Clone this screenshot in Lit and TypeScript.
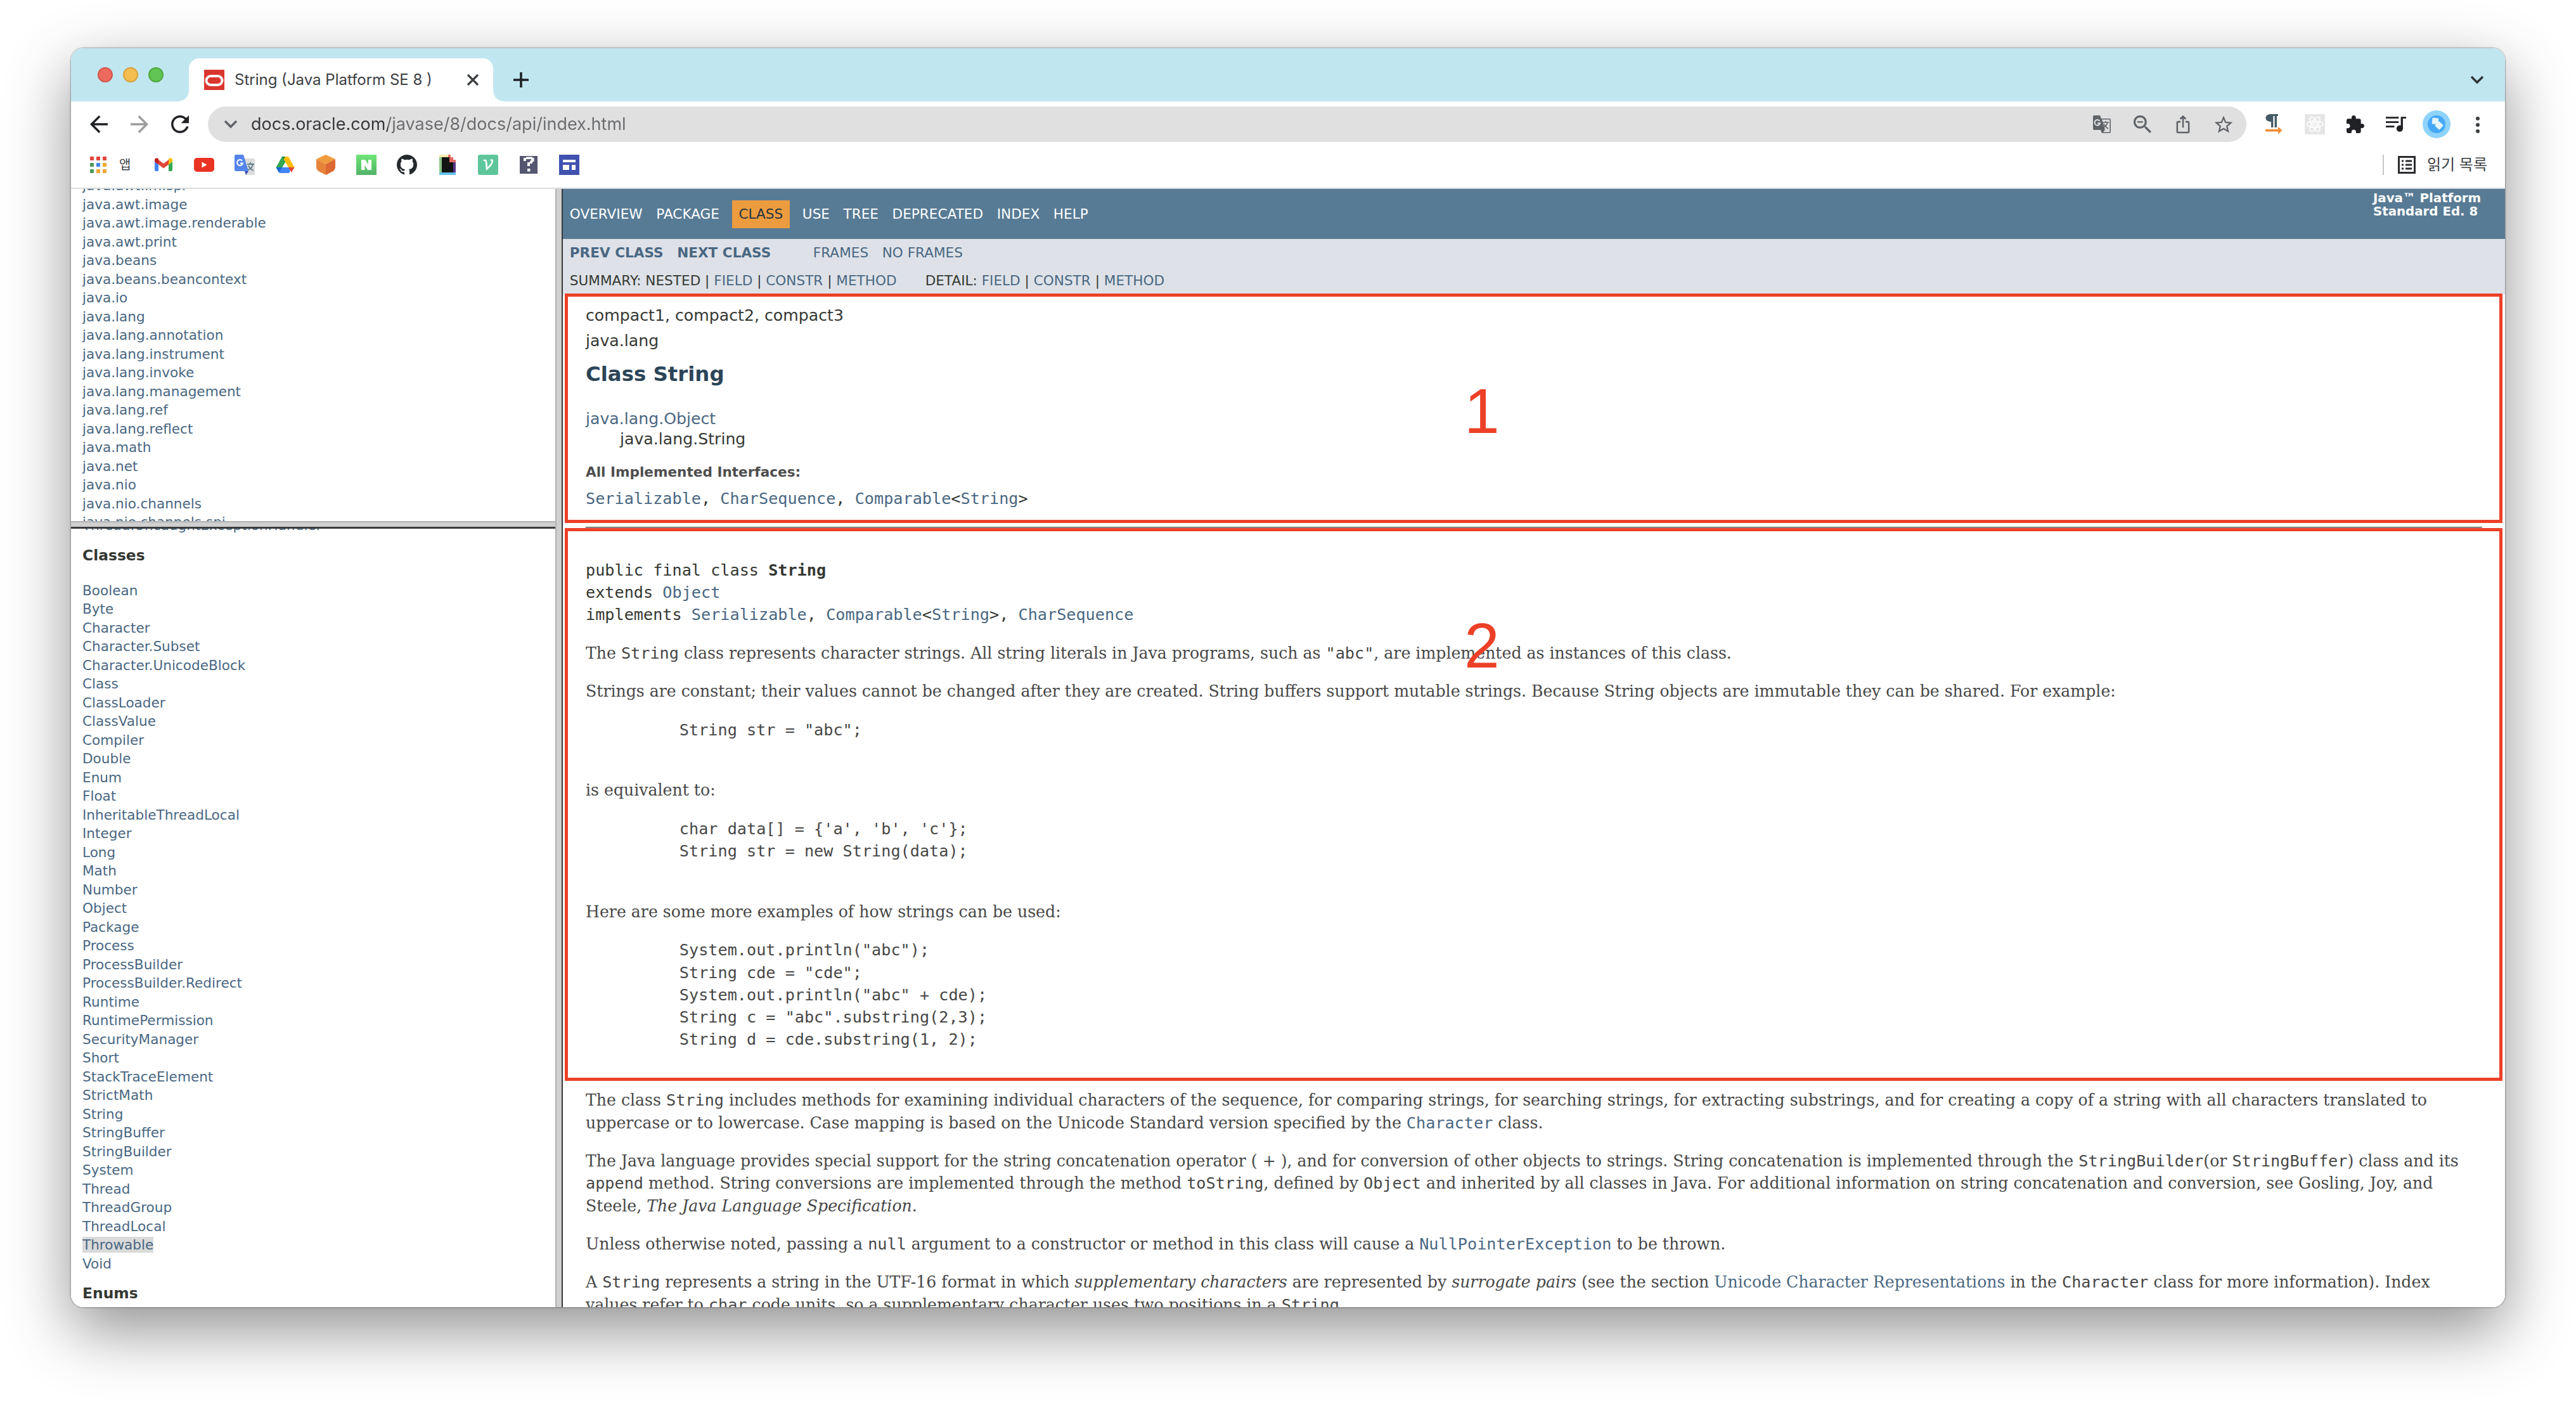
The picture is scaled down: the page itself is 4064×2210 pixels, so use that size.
import { LitElement, html, css, svg } from "lit";
import { customElement } from "lit/decorators.js";

const PACKAGES = [
  "java.awt.im.spi", "java.awt.image", "java.awt.image.renderable", "java.awt.print", "java.beans",
  "java.beans.beancontext", "java.io", "java.lang", "java.lang.annotation", "java.lang.instrument",
  "java.lang.invoke", "java.lang.management", "java.lang.ref", "java.lang.reflect", "java.math",
  "java.net", "java.nio", "java.nio.channels", "java.nio.channels.spi",
];

const CLASSES = [
  "Boolean", "Byte", "Character", "Character.Subset", "Character.UnicodeBlock", "Class", "ClassLoader",
  "ClassValue", "Compiler", "Double", "Enum", "Float", "InheritableThreadLocal", "Integer", "Long", "Math",
  "Number", "Object", "Package", "Process", "ProcessBuilder", "ProcessBuilder.Redirect", "Runtime",
  "RuntimePermission", "SecurityManager", "Short", "StackTraceElement", "StrictMath", "String",
  "StringBuffer", "StringBuilder", "System", "Thread", "ThreadGroup", "ThreadLocal", "Throwable", "Void",
];

const SAMPLE_LITERAL = `     String str = "abc";
 `;
const SAMPLE_ARRAY = `     char data[] = {'a', 'b', 'c'};
     String str = new String(data);
 `;
const SAMPLE_USES = `     System.out.println("abc");
     String cde = "cde";
     System.out.println("abc" + cde);
     String c = "abc".substring(2,3);
     String d = cde.substring(1, 2);
 `;

const link = (label: string) => html`<a href="#">${label}</a>`;

const glyph = (size: number, viewBox: string, body: unknown) =>
  html`<svg width=${size} height=${size} viewBox=${viewBox} aria-hidden="true">${body}</svg>`;

const ICONS = {
  back: glyph(28, "4 4 16 16", svg`<path fill="#202124" d="M20 11H7.83l5.59-5.59L12 4l-8 8 8 8 1.41-1.41L7.83 13H20v-2z"/>`),
  forward: glyph(28, "4 4 16 16", svg`<path fill="#9c9c9e" d="M12 4l-1.41 1.41L16.17 11H4v2h12.17l-5.58 5.59L12 20l8-8z"/>`),
  reload: glyph(28, "4 4 16 16", svg`<path fill="#202124" d="M17.65 6.35C16.2 4.9 14.21 4 12 4c-4.42 0-7.99 3.58-7.99 8s3.57 8 7.99 8c3.73 0 6.84-2.55 7.73-6h-2.08c-.82 2.33-3.04 4-5.65 4-3.31 0-6-2.69-6-6s2.69-6 6-6c1.66 0 3.14.69 4.22 1.78L13 11h7V4l-2.35 2.35z"/>`),
  chevron: glyph(24, "0 0 24 24", svg`<path fill="none" stroke="currentColor" stroke-width="3.4" d="M3 7l9 9 9-9"/>`),
  close: glyph(24, "0 0 24 24", svg`<path fill="none" stroke="#3c4043" stroke-width="3.2" d="M4 4l16 16M20 4L4 20"/>`),
  plus: glyph(24, "0 0 24 24", svg`<path fill="none" stroke="#202124" stroke-width="3.6" d="M12 0v24M0 12h24"/>`),
  oracle: glyph(32, "0 0 32 32", svg`<rect width="32" height="32" fill="#d9362f"/><rect x="3.5" y="10" width="25" height="14" rx="7" fill="none" stroke="#fff" stroke-width="4"/>`),
  translate: glyph(28, "0 0 28 28", svg`<path fill="#5f6368" d="M2 0h9l2 5h13a2 2 0 0 1 2 2v19a2 2 0 0 1-2 2H14l-2-5H2a2 2 0 0 1-2-2V2a2 2 0 0 1 2-2z"/><path fill="#e0e0e0" d="M14 6.6h12.4v19.8H16l3-3.6z"/><path fill="none" stroke="#e0e0e0" stroke-width="2" d="M10.5 9a4.3 4.3 0 1 0 .6 3.3H7"/><path fill="none" stroke="#5f6368" stroke-width="1.6" d="M15 11h10M20 9v2M23 11c-1 4-4 7-7 8M17 13c1 3 4 6 7 8"/>`),
  zoomOut: glyph(28, "3 3 17.5 17.5", svg`<path fill="#5f6368" d="M15.5 14h-.79l-.28-.27C15.41 12.59 16 11.11 16 9.5 16 5.91 13.09 3 9.5 3S3 5.91 3 9.5 5.91 16 9.5 16c1.61 0 3.09-.59 4.23-1.57l.27.28v.79l5 4.99L20.49 19l-4.99-5zm-6 0C7.01 14 5 11.99 5 9.5S7.01 5 9.5 5 14 7.01 14 9.5 11.99 14 9.5 14zM6.7 8.8h5.6v1.4H6.7z"/>`),
  share: glyph(30, "0.5 0.5 23 23", svg`<path fill="#5f6368" d="M16 5l-1.42 1.42-1.59-1.59V16h-1.98V4.83L9.42 6.42 8 5l4-4 4 4zm4 5v11c0 1.1-.9 2-2 2H6c-1.11 0-2-.9-2-2V10c0-1.11.89-2 2-2h3v2H6v11h12V10h-3V8h3c1.1 0 2 .89 2 2z"/>`),
  star: glyph(30, "1.5 1 21 21", svg`<path fill="#5f6368" d="M22 9.24l-7.19-.62L12 2 9.19 8.63 2 9.24l5.46 4.73L5.82 21 12 17.27 18.18 21l-1.63-7.03L22 9.24zM12 15.4l-3.76 2.27 1-4.28-3.32-2.88 4.38-.38L12 6.1l1.71 4.04 4.38.38-3.32 2.88 1 4.28L12 15.4z"/>`),
  pilcrow: glyph(32, "0 0 32 32", svg`<path fill="#455a64" d="M22 0v3h-2v18h-3.4V3h-2.2v18H11V12C5.5 12 2.5 9.500 2.5 6S5.5 0 11 0z"/><path fill="#f28b30" d="M2 24h20v-4l6.5 5.5L22 31.5v-4H2z"/>`),
  react: glyph(32, "0 0 32 32", svg`<rect width="32" height="32" fill="#e6e6e6"/><g fill="none" stroke="#fff" stroke-width="1.5"><ellipse cx="16" cy="16" rx="13" ry="5"/><ellipse cx="16" cy="16" rx="13" ry="5" transform="rotate(60 16 16)"/><ellipse cx="16" cy="16" rx="13" ry="5" transform="rotate(120 16 16)"/><circle cx="16" cy="16" r="2.5"/></g>`),
  puzzle: glyph(28, "2 1 21 21", svg`<path fill="#202124" d="M20.5 11H19V7c0-1.1-.9-2-2-2h-4V3.5C13 2.12 11.88 1 10.5 1S8 2.12 8 3.5V5H4c-1.1 0-1.99.9-1.99 2v3.8H3.5c1.49 0 2.7 1.21 2.7 2.7s-1.21 2.7-2.7 2.7H2V20c0 1.1.9 2 2 2h3.8v-1.5c0-1.49 1.21-2.7 2.7-2.7 1.49 0 2.7 1.21 2.7 2.7V22H17c1.1 0 2-.9 2-2v-4h1.5c1.38 0 2.5-1.12 2.5-2.5S21.88 11 20.5 11z"/>`),
  media: glyph(32, "3 3.5 19 19", svg`<path fill="#202124" d="M15 6H3v1.6h12V6zm0 4.2H3v1.6h12v-1.6zM3 16h8v-1.6H3V16zM17 6v8.18c-.31-.11-.65-.18-1-.18-1.66 0-3 1.34-3 3s1.34 3 3 3 3-1.34 3-3V7.6h3V6h-5z"/>`),
  avatar: glyph(44, "0 0 44 44", svg`<circle cx="22" cy="22" r="22" fill="#8fd3fa"/><circle cx="22" cy="22" r="14" fill="#45a9f7"/><rect x="15" y="12" width="10" height="10" rx="1.5" fill="#e4f5fd" transform="rotate(6 20 17)"/><rect x="21" y="19" width="10" height="10" rx="1.5" fill="#e4f5fd" transform="rotate(42 26 24)"/>`),
  menu: glyph(28, "0 0 28 28", svg`<g fill="#3c4043"><circle cx="15" cy="5" r="3"/><circle cx="15" cy="15" r="3"/><circle cx="15" cy="25" r="3"/></g>`),
  apps: glyph(26, "0 0 26 26", svg`<path fill="#e0463a" d="M0 0h6v6H0zM10 0h6v6h-6zM20 0h6v6h-6z"/><path fill="#4e9a5b" d="M0 10h6v6H0zM0 20h6v6H0z"/><path fill="#4285f4" d="M10 10h6v6h-6z"/><path fill="#eba936" d="M20 10h6v6h-6zM10 20h6v6h-6zM20 20h6v6h-6z"/>`),
  reading: glyph(28, "0 0 28 28", svg`<rect x="1.5" y="1.5" width="25" height="25" fill="none" stroke="#2b2c2f" stroke-width="3"/><path fill="#2b2c2f" d="M6 6.5h3v3H6zM6 12.5h3v3H6zM6 18.5h3v3H6zM12 6.5h10v3H12zM12 12.5h10v3H12zM12 18.5h10v3H12z"/>`),
};

const BOOKMARKS: { name: string; icon: unknown }[] = [
  { name: "Gmail", icon: glyph(32, "0 0 32 32", svg`<path fill="#4285f4" d="M2 11l6 4.5V26H4a2 2 0 0 1-2-2z"/><path fill="#34a853" d="M30 11l-6 4.5V26h4a2 2 0 0 0 2-2z"/><path fill="#e0463a" d="M8 8l8 6 8-6v7.5l-8 6-8-6z"/><path fill="#c5221f" d="M2 8.5C2 5.5 5.2 4.4 7.4 6L8 6.5v9L2 11z"/><path fill="#fbbc04" d="M30 8.5c0-3-3.2-4.1-5.4-2.5l-.6.5v9l6-4.5z"/>`) },
  { name: "YouTube", icon: glyph(32, "0 0 32 32", svg`<rect y="5" width="32" height="22" rx="5" fill="#ea3323"/><path fill="#fff" d="M12.5 11.5v9l8-4.5z"/>`) },
  { name: "Translate", icon: glyph(32, "0 0 32 32", svg`<path fill="#dcdcdc" d="M14 6h16a2 2 0 0 1 2 2v22a2 2 0 0 1-2 2H18z"/><path fill="none" stroke="#607d8b" stroke-width="1.8" d="M20 15h11M25 12v3M29 15c-1 4-4 8-8 9M22 17c1 4 4 6 8 8"/><path fill="#3a49b0" d="M16 26h6l-4 6z"/><path fill="#5484ec" d="M2 0h12l8 26H2a2 2 0 0 1-2-2V2a2 2 0 0 1 2-2z"/><path fill="none" stroke="#fff" stroke-width="2" d="M12 9.5a4.5 4.5 0 1 0 1 4H9"/>`) },
  { name: "Drive", icon: glyph(32, "0 0 32 32", svg`<path fill="#34a853" d="M11 3h5l3 5L7 27l-5.5-7z"/><path fill="#188038" d="M11 3h10l-5 8z"/><path fill="#fbbc04" d="M16 3h5l9.5 17H21l-7.5-13z"/><path fill="#4285f4" d="M7.5 20h17L23 27.5a2 2 0 0 1-1.5 1.5H8a2 2 0 0 1-1.5-1z"/><path fill="#1967d2" d="M1.5 20H11l-5 8.5z"/><path fill="#ea4335" d="M21 20h9.5l-4.7 8z"/><path fill="#fff" d="M16 12l4.5 8h-9z"/>`) },
  { name: "Cube", icon: glyph(32, "0 0 32 32", svg`<path fill="#f09b3f" d="M16 0l15 7-15 8L1 7z"/><path fill="#e8833a" d="M1 7l15 8v17L3.5 25.5 1 21z"/><path fill="#dc6832" d="M31 7l-15 8v17l12.5-6.5L31 21z"/>`) },
  { name: "Naver", icon: glyph(32, "0 0 32 32", svg`<defs><linearGradient id="n" x1="0" y1="0" x2="0" y2="1"><stop offset="0" stop-color="#6ee676"/><stop offset="1" stop-color="#52b36a"/></linearGradient></defs><rect width="32" height="32" fill="url(#n)"/><path fill="#fff" d="M8 8h6l5 7.500V8h5v16h-6l-4.500-7.500V24H8z"/>`) },
  { name: "GitHub", icon: glyph(32, "0 0 16 16", svg`<path fill="#24292e" d="M8 0C3.58 0 0 3.58 0 8c0 3.54 2.29 6.53 5.47 7.59.4.07.55-.17.55-.38 0-.19-.01-.82-.01-1.49-2.01.37-2.53-.49-2.69-.94-.09-.23-.48-.94-.82-1.13-.28-.15-.68-.52-.01-.53.63-.01 1.08.58 1.23.82.72 1.21 1.87.87 2.33.66.07-.52.28-.87.51-1.07-1.78-.2-3.64-.89-3.64-3.95 0-.87.31-1.59.82-2.15-.08-.2-.36-1.02.08-2.12 0 0 .67-.21 2.2.82.64-.18 1.32-.27 2-.27s1.36.09 2 .27c1.53-1.04 2.2-.82 2.2-.82.44 1.1.16 1.92.08 2.12.51.56.82 1.27.82 2.15 0 3.07-1.87 3.75-3.65 3.95.29.25.54.73.54 1.48 0 1.07-.01 1.93-.01 2.2 0 .21.15.46.55.38A8.013 8.013 0 0 0 16 8c0-4.42-3.58-8-8-8z"/>`) },
  { name: "Notes", icon: glyph(32, "0 0 32 32", svg`<path fill="#f8ecaa" d="M3 0h14v4H3z"/><path fill="#8cc68a" d="M3 4h4v24H3z"/><path fill="#141414" d="M7 4h13v8h5v16H7z"/><path fill="#e26a65" d="M17 0h4v4h4v4h4v4H19V4h-2z"/><path fill="#5b3a8c" d="M25 12h4v16h-4z"/><path fill="#62c3f0" d="M3 28h26v4H3z"/>`) },
  { name: "Velog", icon: glyph(32, "0 0 32 32", svg`<rect width="32" height="32" rx="3" fill="#5fc69b"/><path fill="none" stroke="#fff" stroke-width="2.6" d="M9 9.5c3-2 4 0 4.2 3.5l.8 9.5c5-4 8.5-8 8.8-12.5.1-1.5-1.3-2-3-1"/>`) },
  { name: "Quiz", icon: glyph(32, "0 0 32 32", svg`<rect x="2" y="2" width="28" height="28" fill="#55566f"/><path fill="#fff" d="M8 5h4V3.5h10V5h2.5v6H22v3h-4v4h-4v-6h4V9.5h2V7h-8v3H8zM14 22h4.5v4.5H14z"/>`) },
  { name: "Sites", icon: glyph(32, "0 0 32 32", svg`<rect width="32" height="32" fill="#4052b0"/><path fill="#fff" d="M6 8h20v4H6zM6 16h10v8H6zM20 16h6v8h-6z"/>`) },
];

@customElement("browser-bar")
class BrowserBar extends LitElement {
  static styles = css`
    :host { display: block; font-family: Inter, "Noto Sans CJK KR", sans-serif; background: #fff; }
    svg { display: block; flex: none; }
    button { display: flex; align-items: center; justify-content: center; border: 0; padding: 0; background: none; font: inherit; color: inherit; }
    .tabs { display: flex; align-items: flex-end; height: 84px; background: #c0e6f0; }
    .lights { display: flex; gap: 16px; padding: 0 40px 30px 42px; }
    .light { width: 24px; height: 24px; border-radius: 50%; border: 2px solid; box-sizing: border-box; }
    .light.red { background: #ec6a5e; border-color: #d5574c; }
    .light.amber { background: #f4bd4f; border-color: #d9a23b; }
    .light.green { background: #61c454; border-color: #4fa83f; }
    .tab { display: flex; align-items: center; box-sizing: border-box; width: 480px; height: 68px; padding: 0 20px 0 24px; gap: 16px; background: #fff; border-radius: 16px 16px 0 0; position: relative; font-size: 24px; line-height: 28px; color: #3c4043; }
    .tab::before, .tab::after { content: ""; position: absolute; bottom: 0; width: 16px; height: 16px; }
    .tab::before { left: -16px; background: radial-gradient(circle at 0 0, transparent 15px, #fff 16px); }
    .tab::after { right: -16px; background: radial-gradient(circle at 100% 0, transparent 15px, #fff 16px); }
    .tab-title { flex: 1; white-space: nowrap; }
    .new-tab { width: 56px; height: 68px; margin-left: 16px; }
    .tab-search { width: 56px; height: 68px; margin: 0 16px 0 auto; color: #303236; }
    .toolbar { display: flex; align-items: center; height: 72px; padding: 0 12px; }
    .tool { width: 64px; height: 56px; flex: none; }
    .omnibox { display: flex; align-items: center; flex: 1; height: 56px; margin: 0 12px; padding: 0 4px 0 24px; box-sizing: border-box; background: #e0e0e0; border-radius: 28px; color: #5f6368; }
    .url { flex: 1; min-width: 0; height: 56px; border: 0; margin: 0; padding: 0 0 0 20px; outline: 0; font: 27px/56px Inter, sans-serif; color: transparent; background: linear-gradient(90deg, #36373a 236px, #6b6c6f 236px); -webkit-background-clip: text; background-clip: text; }
    .bookmarks { display: flex; align-items: center; box-sizing: border-box; height: 66px; padding: 0 28px 8px 30px; border-bottom: 2px solid #d9dadb; line-height: 32px; color: #3c4043; }
    .apps { gap: 20px; margin-right: 20px; font-size: 20px; }
    .mark { display: flex; justify-content: center; width: 64px; }
    .reading { gap: 18px; margin-left: auto; padding-left: 22px; border-left: 2px solid #c6c7c9; font-size: 24px; }
  `;

  render() {
    return html`
      <div class="tabs">
        <div class="lights">
          <button class="light red" aria-label="Close window"></button>
          <button class="light amber" aria-label="Minimise window"></button>
          <button class="light green" aria-label="Zoom window"></button>
        </div>
        <div class="tab">
          ${ICONS.oracle}
          <span class="tab-title">String (Java Platform SE 8 )</span>
          <button aria-label="Close tab">${ICONS.close}</button>
        </div>
        <button class="new-tab" aria-label="New tab">${ICONS.plus}</button>
        <button class="tab-search" aria-label="Search tabs">${ICONS.chevron}</button>
      </div>
      <div class="toolbar">
        <button class="tool" aria-label="Back">${ICONS.back}</button>
        <button class="tool" aria-label="Forward">${ICONS.forward}</button>
        <button class="tool" aria-label="Reload">${ICONS.reload}</button>
        <div class="omnibox">
          <button aria-label="Site information">${ICONS.chevron}</button>
          <input class="url" type="text" aria-label="Address" .value=${"docs.oracle.com/javase/8/docs/api/index.html"} />
          <button class="tool" aria-label="Translate page">${ICONS.translate}</button>
          <button class="tool" aria-label="Zoom level">${ICONS.zoomOut}</button>
          <button class="tool" aria-label="Share">${ICONS.share}</button>
          <button class="tool" aria-label="Bookmark">${ICONS.star}</button>
        </div>
        <button class="tool" aria-label="Pilcrow">${ICONS.pilcrow}</button>
        <button class="tool" aria-label="React tools">${ICONS.react}</button>
        <button class="tool" aria-label="Extensions">${ICONS.puzzle}</button>
        <button class="tool" aria-label="Media">${ICONS.media}</button>
        <button class="tool" aria-label="Profile">${ICONS.avatar}</button>
        <button class="tool" aria-label="Menu">${ICONS.menu}</button>
      </div>
      <div class="bookmarks">
        <button class="apps">${ICONS.apps}<span>앱</span></button>
        ${BOOKMARKS.map((b) => html`<a class="mark" href="#" aria-label=${b.name}>${b.icon}</a>`)}
        <button class="reading">${ICONS.reading}<span>읽기 목록</span></button>
      </div>
    `;
  }
}

@customElement("doc-index")
class DocIndex extends LitElement {
  static properties = { kind: {} };
  declare kind: string;

  static styles = css`
    :host { display: block; overflow: hidden; background: #fff; min-height: 0; }
    .index { zoom: 1.8; margin: -12px 10px 0; font: 12px/1.2 "DejaVu Sans", Arial, sans-serif; color: #353833; }
    h2 { font-size: 13px; margin: 11px 0; padding-bottom: 3px; }
    ul { margin: 0; padding: 0; list-style: none; }
    li { padding-top: 2px; }
    a { color: #4a6782; text-decoration: none; }
    .hit { background: #dadada; }
  `;

  render() {
    if (this.kind === "packages") {
      return html`<nav class="index"><ul>${PACKAGES.map((p) => html`<li>${link(p)}</li>`)}</ul></nav>`;
    }
    return html`
      <nav class="index">
        <ul><li>${link("Thread.UncaughtExceptionHandler")}</li></ul>
        <h2>Classes</h2>
        <ul>${CLASSES.map((c) => html`<li><a href="#" class=${c === "Throwable" ? "hit" : ""}>${c}</a></li>`)}</ul>
        <h2>Enums</h2>
      </nav>`;
  }
}

@customElement("class-page")
class ClassPage extends LitElement {
  static styles = css`
    :host { display: block; overflow: hidden; background: #fff; min-width: 0; }
    .page { zoom: 1.8; font: 14px/1.2 "DejaVu Sans", Arial, sans-serif; color: #353833; }
    a { color: #4a6782; text-decoration: none; }
    ul { margin: 0; padding: 0; list-style: none; }
    .top-nav { display: flex; justify-content: space-between; align-items: flex-start; box-sizing: border-box; height: 44px; padding-top: 10px; background: #587b95; color: #fff; font-size: 12px; text-transform: uppercase; }
    .top-nav a { color: #fff; }
    .nav-list { display: flex; }
    .nav-list li { padding: 5px 6px; }
    .nav-list .current { margin: 0 5px; background: #ec9c3e; color: #253441; }
    .about { margin: -8px 21px 0 0; font-size: 11px; line-height: 12px; font-weight: bold; text-transform: none; }
    .sub-nav { display: grid; box-sizing: border-box; height: 48px; align-content: start; background: #dee2e8; font-size: 12px; text-transform: uppercase; }
    .row { display: flex; gap: 25px; }
    .row.jump { padding: 5px 6px; }
    .header { padding: 6px 20px 0; }
    .sub-title { margin-top: 5px; }
    .title { margin: 10px 0; font-size: 18px; color: #2c4557; }
    .content { padding: 10px 20px; }
    .child { padding: 1px 0 0 30px; }
    .details { line-height: 1.4; }
    dl { margin: 12px 0 15px; font-size: 12px; }
    dt { font-weight: bold; color: #4e4e4e; }
    dd { margin: 5px 0 0; font: 14px/1.4 "DejaVu Sans Mono", monospace; }
    hr { margin: 0 0 27px; border: 1px inset #a8a8a8; }
    pre, code { font-family: "DejaVu Sans Mono", monospace; font-size: 14px; }
    pre { margin: 0 0 14px; }
    .block { margin-right: 10px; font-family: "DejaVu Serif", Georgia, serif; color: #474747; }
    .block p, .block pre { margin: 14px 0; }
    .block p:first-child { margin-top: 0; }
    blockquote { margin: 14px 40px; }
  `;

  render() {
    return html`
      <article class="page">
        <nav class="top-nav">
          <ul class="nav-list">
            <li>${link("Overview")}</li><li>${link("Package")}</li><li class="current">Class</li>
            <li>${link("Use")}</li><li>${link("Tree")}</li><li>${link("Deprecated")}</li>
            <li>${link("Index")}</li><li>${link("Help")}</li>
          </ul>
          <div class="about">Java™ Platform<br />Standard Ed. 8</div>
        </nav>
        <nav class="sub-nav">
          <div class="row">
            <ul class="nav-list"><li><a href="#"><b>Prev Class</b></a></li><li><a href="#"><b>Next Class</b></a></li></ul>
            <ul class="nav-list"><li>${link("Frames")}</li><li>${link("No Frames")}</li></ul>
          </div>
          <div class="row jump">
            <span>Summary: Nested | ${link("Field")} | ${link("Constr")} | ${link("Method")}</span>
            <span>Detail: ${link("Field")} | ${link("Constr")} | ${link("Method")}</span>
          </div>
        </nav>
        <header class="header">
          <div class="sub-title">compact1, compact2, compact3</div>
          <div class="sub-title">java.lang</div>
          <h2 class="title">Class String</h2>
        </header>
        <div class="content">
          <div>${link("java.lang.Object")}</div>
          <div class="child">java.lang.String</div>
          <div class="details">
            <dl>
              <dt>All Implemented Interfaces:</dt>
              <dd>${link("Serializable")}, ${link("CharSequence")}, ${link("Comparable")}&lt;${link("String")}&gt;</dd>
            </dl>
            <hr />
            <pre>public final class <b>String</b>${"\n"}extends ${link("Object")}${"\n"}implements ${link("Serializable")}, ${link("Comparable")}&lt;${link("String")}&gt;, ${link("CharSequence")}</pre>
            <div class="block">
              <p>The <code>String</code> class represents character strings. All string literals in Java programs, such as <code>"abc"</code>, are implemented as instances of this class.</p>
              <p>Strings are constant; their values cannot be changed after they are created. String buffers support mutable strings. Because String objects are immutable they can be shared. For example:</p>
              <blockquote><pre>${SAMPLE_LITERAL}</pre></blockquote>
              <p>is equivalent to:</p>
              <blockquote><pre>${SAMPLE_ARRAY}</pre></blockquote>
              <p>Here are some more examples of how strings can be used:</p>
              <blockquote><pre>${SAMPLE_USES}</pre></blockquote>
              <p>The class <code>String</code> includes methods for examining individual characters of the sequence, for comparing strings, for searching strings, for extracting substrings, and for creating a copy of a string with all characters translated to uppercase or to lowercase. Case mapping is based on the Unicode Standard version specified by the <a href="#"><code>Character</code></a> class.</p>
              <p>The Java language provides special support for the string concatenation operator (&nbsp;+&nbsp;), and for conversion of other objects to strings. String concatenation is implemented through the <code>StringBuilder</code>(or <code>StringBuffer</code>) class and its <code>append</code> method. String conversions are implemented through the method <code>toString</code>, defined by <code>Object</code> and inherited by all classes in Java. For additional information on string concatenation and conversion, see Gosling, Joy, and Steele, <i>The Java Language Specification</i>.</p>
              <p>Unless otherwise noted, passing a <code>null</code> argument to a constructor or method in this class will cause a <a href="#"><code>NullPointerException</code></a> to be thrown.</p>
              <p>A <code>String</code> represents a string in the UTF-16 format in which <em>supplementary characters</em> are represented by <em>surrogate pairs</em> (see the section ${link("Unicode Character Representations")} in the <code>Character</code> class for more information). Index values refer to <code>char</code> code units, so a supplementary character uses two positions in a <code>String</code>.</p>
            </div>
          </div>
        </div>
      </article>
    `;
  }
}

@customElement("app-root")
class AppRoot extends LitElement {
  static styles = css`
    :host { display: block; box-sizing: border-box; height: 100vh; padding: 76px 112px 148px; background: #fff; overflow: hidden; }
    .window { display: flex; flex-direction: column; height: 100%; border-radius: 20px; overflow: hidden; background: #fff; }
    .shadow { height: 100%; border-radius: 20px; box-shadow: 0 0 2px 1px rgba(0, 0, 0, 0.3), 0 36px 100px rgba(0, 0, 0, 0.44); }
    .frames { flex: 1; min-height: 0; display: grid; grid-template-columns: calc(20% - 4px) 12px minmax(0, 1fr); }
    .side { display: grid; grid-template-rows: calc(30% - 5px) 12px minmax(0, 1fr); min-height: 0; }
    .split { box-sizing: border-box; background: #cfcfcf; }
    .split.across { border-top: 2px solid #b0b0b0; border-bottom: 3px solid #3a3a3c; }
    .split.down { border-left: 2px solid #b4b4b4; border-right: 2px solid #3a3a3c; }
    .main { display: grid; position: relative; min-height: 0; overflow: hidden; }
    .mark { position: absolute; left: 3px; right: 4px; box-sizing: border-box; border: 5px solid #ec4027; }
    .mark.one { top: 165px; height: 362px; }
    .mark.two { top: 535px; height: 872px; }
    .number { position: absolute; left: 1414px; top: 130px; font: 100px/100px "Liberation Sans", Arial, sans-serif; color: #ec4027; }
  `;

  render() {
    return html`
      <div class="shadow">
        <div class="window">
          <browser-bar></browser-bar>
          <div class="frames">
            <div class="side">
              <doc-index kind="packages"></doc-index>
              <div class="split across"></div>
              <doc-index kind="classes"></doc-index>
            </div>
            <div class="split down"></div>
            <div class="main">
              <class-page></class-page>
              <div class="mark one"><span class="number">1</span></div>
              <div class="mark two"><span class="number">2</span></div>
            </div>
          </div>
        </div>
      </div>
    `;
  }
}
